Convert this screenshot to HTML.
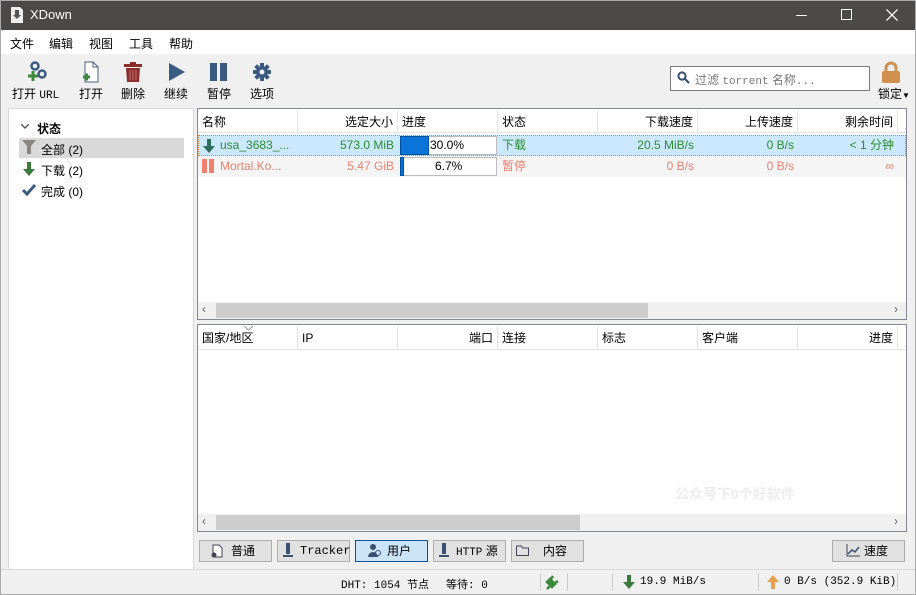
<!DOCTYPE html>
<html><head><meta charset="utf-8"><style>
*{margin:0;padding:0;box-sizing:border-box}
body{width:916px;height:595px;overflow:hidden;background:#f0f0f0;font-family:"Liberation Sans","Noto Sans CJK SC",sans-serif;font-size:12px;color:#000;position:relative}
.a{position:absolute}
.t{white-space:nowrap}
.mono{font-family:"Liberation Mono","Noto Sans CJK SC",monospace;font-size:11px}
.hdr{position:absolute;top:0;height:23px;border-right:1px solid #e5e5e5;line-height:23px;padding:0 4px;white-space:nowrap}
.cell{position:absolute;height:21px;line-height:21px;padding:0 4px;white-space:nowrap}
.btn{position:absolute;top:540px;height:22px;border:1px solid #adadad;background:#e1e1e1;line-height:20px;padding-left:22px;font-size:12px;white-space:nowrap}
</style></head><body>
<div class="a" style="left:0;top:0;width:916px;height:595px;border:1px solid #aaa;z-index:9;pointer-events:none"></div>
<!-- title -->
<div class="a" style="left:0;top:0;width:916px;height:30px;background:#4b4a48"></div>
<svg class="a" style="left:10px;top:6px" width="14" height="18"><path d="M1 1h9l3 3v13H1z" fill="#eee"/><path d="M5 4h4v5h2l-4 4-4-4h2z" fill="#555"/></svg>
<div class="a t" style="left:30px;top:7px;color:#fff;font-size:13px">XDown</div>
<div class="a" style="left:796px;top:15px;width:11px;height:1px;background:#fff"></div>
<div class="a" style="left:841px;top:9px;width:11px;height:11px;border:1px solid #fff"></div>
<svg class="a" style="left:886px;top:9px" width="12" height="12"><path d="M0 0L12 12M12 0L0 12" stroke="#fff" stroke-width="1.2"/></svg>
<!-- menu -->
<div class="a" style="left:0;top:30px;width:916px;height:24px;background:#fff"></div>
<div class="a t" style="left:10px;top:35px">文件</div>
<div class="a t" style="left:49px;top:35px">编辑</div>
<div class="a t" style="left:89px;top:35px">视图</div>
<div class="a t" style="left:129px;top:35px">工具</div>
<div class="a t" style="left:169px;top:35px">帮助</div>
<!-- toolbar -->
<svg class="a" style="left:26px;top:61px" width="22" height="22"><circle cx="9" cy="5" r="3.5" fill="none" stroke="#3a5a80" stroke-width="2.5"/><circle cx="16" cy="13" r="3.5" fill="none" stroke="#3a5a80" stroke-width="2.5"/><path d="M2 15h10M7 10v10" stroke="#3a8a3a" stroke-width="3"/></svg>
<div class="a t" style="left:12px;top:85px">打开 <span class="mono">URL</span></div>
<svg class="a" style="left:82px;top:61px" width="18" height="22"><path d="M3 1h8l5 5v15H3z" fill="#fff" stroke="#4a6080"/><path d="M11 1v5h5" fill="none" stroke="#4a6080"/><path d="M1 16h7M4.5 12.5v7" stroke="#3a8a3a" stroke-width="3"/></svg>
<div class="a t" style="left:79px;top:85px">打开</div>
<svg class="a" style="left:124px;top:62px" width="18" height="20"><rect x="0" y="2" width="18" height="3" fill="#8b2e2e"/><rect x="6" y="0" width="6" height="3" fill="#8b2e2e"/><path d="M2 6h14l-1 14H3z" fill="#8b2e2e"/><path d="M6 8v10M9 8v10M12 8v10" stroke="#c07070" stroke-width="1"/></svg>
<div class="a t" style="left:121px;top:85px">删除</div>
<svg class="a" style="left:168px;top:63px" width="18" height="18"><path d="M1 0L17 9L1 18z" fill="#3a5a80"/></svg>
<div class="a t" style="left:164px;top:85px">继续</div>
<div class="a" style="left:210px;top:63px;width:7px;height:18px;background:#3a5a80"></div>
<div class="a" style="left:220px;top:63px;width:7px;height:18px;background:#3a5a80"></div>
<div class="a t" style="left:207px;top:85px">暂停</div>
<svg class="a" style="left:253px;top:63px" width="18" height="18" viewBox="0 0 18 18"><g fill="#3a5a80"><circle cx="9" cy="9" r="6"/><rect x="7" y="0" width="4" height="18"/><rect x="0" y="7" width="18" height="4"/><rect x="7" y="0" width="4" height="18" transform="rotate(45 9 9)"/><rect x="7" y="0" width="4" height="18" transform="rotate(-45 9 9)"/></g><circle cx="9" cy="9" r="2.5" fill="#f0f0f0"/></svg>
<div class="a t" style="left:250px;top:85px">选项</div>
<div class="a" style="left:670px;top:66px;width:200px;height:25px;background:#fff;border:1px solid #7a7a7a"></div>
<svg class="a" style="left:677px;top:71px" width="13" height="13"><circle cx="5" cy="5" r="3.6" fill="none" stroke="#3a5070" stroke-width="2"/><path d="M8 8l4 4" stroke="#3a5070" stroke-width="2.2"/></svg>
<div class="a t" style="left:695px;top:71px;color:#777">过滤 <span class="mono">torrent</span> 名称<span class="mono">...</span></div>
<svg class="a" style="left:880px;top:61px" width="22" height="22"><path d="M6 10V7a5 5 0 0 1 10 0v3" fill="none" stroke="#d09050" stroke-width="3"/><rect x="2" y="10" width="18" height="12" rx="2" fill="#d09050"/></svg>
<div class="a t" style="left:878px;top:85px">锁定<span style="font-size:8px">▼</span></div>
<!-- left panel -->
<div class="a" style="left:8px;top:108px;width:186px;height:462px;background:#fff;border:1px solid #d8d8d8"></div>
<svg class="a" style="left:21px;top:124px" width="8" height="6"><path d="M0 0L4 4L8 0" fill="none" stroke="#555" stroke-width="1.4"/></svg>
<div class="a t" style="left:37px;top:120px;font-weight:bold">状态</div>
<div class="a" style="left:19px;top:138px;width:165px;height:20px;background:#d9d9d9"></div>
<svg class="a" style="left:22px;top:140px" width="14" height="14"><path d="M0 0h14L9 6v8H5V6z" fill="#8a8580"/></svg>
<div class="a t" style="left:41px;top:141px">全部 (2)</div>
<svg class="a" style="left:22px;top:162px" width="14" height="14"><path d="M5 0h4v7h4L7 14L1 7h4z" fill="#3a7a3a"/></svg>
<div class="a t" style="left:41px;top:162px">下载 (2)</div>
<svg class="a" style="left:22px;top:184px" width="14" height="12"><path d="M1 6l4 4L13 1" fill="none" stroke="#3a5a80" stroke-width="3"/></svg>
<div class="a t" style="left:41px;top:183px">完成 (0)</div>
<!-- torrent list -->
<div class="a" style="left:197px;top:108px;width:710px;height:212px;background:#fff;border:1px solid #828790;overflow:hidden">
 <div class="a" style="left:0;top:0;width:708px;height:24px;border-bottom:1px solid #e5e5e5"></div>
 <div class="hdr" style="left:0;width:100px;top:2px">名称</div>
 <div class="hdr" style="left:100px;width:100px;top:2px;text-align:right">选定大小</div>
 <div class="hdr" style="left:200px;width:100px;top:2px">进度</div>
 <div class="hdr" style="left:300px;width:100px;top:2px">状态</div>
 <div class="hdr" style="left:400px;width:100px;top:2px;text-align:right">下载速度</div>
 <div class="hdr" style="left:500px;width:100px;top:2px;text-align:right">上传速度</div>
 <div class="hdr" style="left:600px;width:100px;top:2px;text-align:right">剩余时间</div>
 <div class="a" style="left:0;top:26px;width:708px;height:21px;background:#cce8ff;border:1px dotted #f08020"></div>
 <svg class="a" style="left:5px;top:30px" width="12" height="14"><path d="M4 0h4v7h4L6 14L0 7h4z" fill="#2e6e5a"/></svg>
 <div class="cell" style="left:18px;top:26px;color:#2e8b2e">usa_3683_...</div>
 <div class="cell" style="left:100px;top:26px;width:100px;text-align:right;color:#2e8b2e">573.0 MiB</div>
 <div class="a" style="left:202px;top:27px;width:97px;height:19px;background:#fff;border:1px solid #bcbcbc"></div>
 <div class="a" style="left:202px;top:27px;width:29px;height:19px;background:#0a74d8;border:1px solid #0050a0"></div>
 <div class="cell" style="left:228px;top:26px">30.0%</div>
 <div class="cell" style="left:300px;top:26px;color:#2e8b2e">下载</div>
 <div class="cell" style="left:400px;top:26px;width:100px;text-align:right;color:#2e8b2e">20.5 MiB/s</div>
 <div class="cell" style="left:500px;top:26px;width:100px;text-align:right;color:#2e8b2e">0 B/s</div>
 <div class="cell" style="left:600px;top:26px;width:100px;text-align:right;color:#2e8b2e">&lt; 1 分钟</div>
 <div class="a" style="left:0;top:47px;width:708px;height:21px;background:#f5f5f5"></div>
 <div class="a" style="left:4px;top:50px;width:5px;height:14px;background:#f08070"></div>
 <div class="a" style="left:11px;top:50px;width:5px;height:14px;background:#f08070"></div>
 <div class="cell" style="left:18px;top:47px;color:#f08070">Mortal.Ko...</div>
 <div class="cell" style="left:100px;top:47px;width:100px;text-align:right;color:#f08070">5.47 GiB</div>
 <div class="a" style="left:202px;top:48px;width:97px;height:19px;background:#fff;border:1px solid #bcbcbc"></div>
 <div class="a" style="left:202px;top:48px;width:4px;height:19px;background:#0a74d8;border:1px solid #0050a0"></div>
 <div class="cell" style="left:233px;top:47px">6.7%</div>
 <div class="cell" style="left:300px;top:47px;color:#f08070">暂停</div>
 <div class="cell" style="left:400px;top:47px;width:100px;text-align:right;color:#f08070">0 B/s</div>
 <div class="cell" style="left:500px;top:47px;width:100px;text-align:right;color:#f08070">0 B/s</div>
 <div class="cell" style="left:600px;top:47px;width:100px;text-align:right;color:#f08070">∞</div>
 <div class="a" style="left:0;top:193px;width:708px;height:17px;background:#f0f0f0"></div>
 <div class="a" style="left:18px;top:194px;width:432px;height:15px;background:#cdcdcd"></div>
 <div class="a t" style="left:4px;top:193px;color:#606060;font-size:12px">‹</div>
 <div class="a t" style="left:696px;top:193px;color:#606060;font-size:12px">›</div>
</div>
<!-- peers -->
<div class="a" style="left:197px;top:324px;width:710px;height:208px;background:#fff;border:1px solid #828790;overflow:hidden">
 <div class="a" style="left:0;top:0;width:708px;height:25px;border-bottom:1px solid #e5e5e5"></div>
 <svg class="a" style="left:46px;top:1px" width="9" height="5"><path d="M0 0L4.5 4L9 0" fill="none" stroke="#999"/></svg>
 <div class="hdr" style="left:0;width:100px;top:2px">国家/地区</div>
 <div class="hdr" style="left:100px;width:100px;top:2px">IP</div>
 <div class="hdr" style="left:200px;width:100px;top:2px;text-align:right">端口</div>
 <div class="hdr" style="left:300px;width:100px;top:2px">连接</div>
 <div class="hdr" style="left:400px;width:100px;top:2px">标志</div>
 <div class="hdr" style="left:500px;width:100px;top:2px">客户端</div>
 <div class="hdr" style="left:600px;width:100px;top:2px;text-align:right">进度</div>
 <div class="a" style="left:0;top:189px;width:708px;height:17px;background:#f0f0f0"></div>
 <div class="a" style="left:18px;top:190px;width:364px;height:15px;background:#cdcdcd"></div>
 <div class="a t" style="left:4px;top:189px;color:#606060">‹</div>
 <div class="a t" style="left:696px;top:189px;color:#606060">›</div>
</div>
<div class="a t" style="left:675px;top:484px;color:#ededed;font-size:14px;font-weight:bold">公众号下0个好软件</div>
<!-- bottom buttons -->
<div class="btn" style="left:199px;width:73px;padding-left:31px">普通</div>
<svg class="a" style="left:210px;top:544px" width="14" height="14"><path d="M3 1h6l3 3v9H3z" fill="#fff" stroke="#445"/><circle cx="4" cy="11" r="2.5" fill="#445"/></svg>
<div class="btn mono" style="left:277px;width:73px;padding-left:22px">Tracker</div>
<svg class="a" style="left:283px;top:543px" width="10" height="15"><rect x="3" y="0" width="4" height="11" fill="#3a5070"/><rect x="0" y="12" width="10" height="2" fill="#3a5070"/></svg>
<div class="btn" style="left:355px;width:73px;padding-left:31px;background:#cce4f7;border-color:#005499">用户</div>
<svg class="a" style="left:368px;top:543px" width="14" height="15"><circle cx="5" cy="4" r="3" fill="#3a5070"/><path d="M0 14a5 5 0 0 1 10 0z" fill="#3a5070"/><circle cx="10" cy="10" r="2.5" fill="none" stroke="#3a5070"/></svg>
<div class="btn" style="left:433px;width:73px;padding-left:22px"><span class="mono">HTTP</span> 源</div>
<svg class="a" style="left:439px;top:543px" width="10" height="15"><rect x="3" y="0" width="4" height="11" fill="#3a5070"/><rect x="0" y="12" width="10" height="2" fill="#3a5070"/></svg>
<div class="btn" style="left:511px;width:73px;padding-left:31px">内容</div>
<svg class="a" style="left:516px;top:545px" width="14" height="11"><path d="M0.5 1h5l1 2h6v7.5H0.5z" fill="none" stroke="#445"/></svg>
<div class="btn" style="left:832px;width:73px;padding-left:31px">速度</div>
<svg class="a" style="left:846px;top:544px" width="14" height="13"><path d="M1 0v12h13" fill="none" stroke="#445"/><path d="M2 10l4-4 3 2 4-5" fill="none" stroke="#3a5070" stroke-width="1.5"/></svg>
<!-- status bar -->
<div class="a" style="left:0;top:569px;width:916px;height:1px;background:#d8d8d8"></div>
<div class="a t mono" style="left:341px;top:576px">DHT: 1054 <span style="font-family:'Noto Sans CJK SC'">节点</span></div>
<div class="a t mono" style="left:446px;top:576px"><span style="font-family:'Noto Sans CJK SC'">等待</span>: 0</div>
<div class="a" style="left:540px;top:573px;width:1px;height:18px;background:#ccc"></div>
<div class="a" style="left:567px;top:573px;width:1px;height:18px;background:#ccc"></div>
<div class="a" style="left:612px;top:573px;width:1px;height:18px;background:#ccc"></div>
<div class="a" style="left:758px;top:573px;width:1px;height:18px;background:#ccc"></div>
<div class="a" style="left:897px;top:573px;width:1px;height:18px;background:#ccc"></div>
<svg class="a" style="left:545px;top:575px" width="14" height="15"><path d="M2 14l3-3M5 4l5 5-3 3-5-5zM8 1l-2 3M13 6l-3 2" stroke="#3a8a3a" stroke-width="2.5" fill="#3a8a3a"/></svg>
<svg class="a" style="left:623px;top:575px" width="12" height="14"><path d="M4 0h4v7h4L6 14L0 7h4z" fill="#3a7a3a"/></svg>
<div class="a t mono" style="left:640px;top:576px">19.9 MiB/s</div>
<svg class="a" style="left:767px;top:575px" width="12" height="14"><path d="M4 14h4V7h4L6 0L0 7h4z" fill="#e8a050"/></svg>
<div class="a t mono" style="left:784px;top:576px">0 B/s (352.9 KiB)</div>
</body></html>
